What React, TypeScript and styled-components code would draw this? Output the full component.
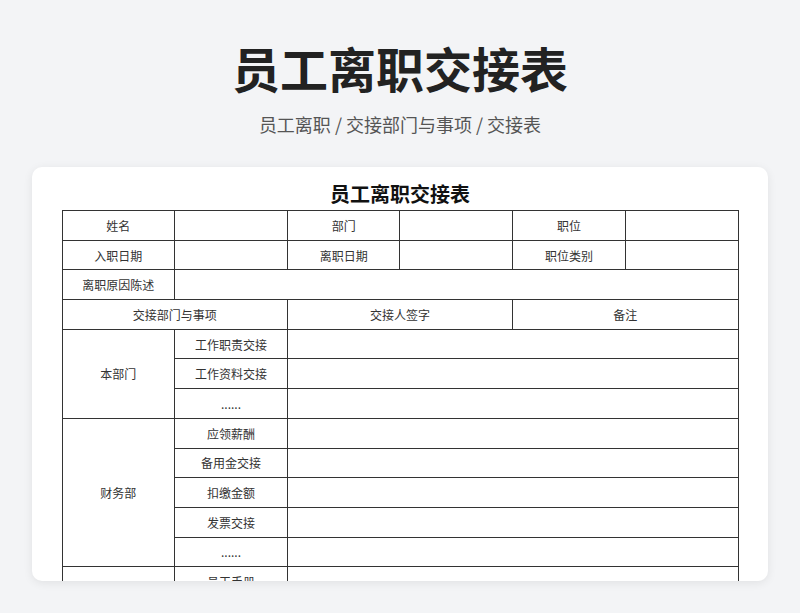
import styled, { createGlobalStyle } from 'styled-components'

const Global = createGlobalStyle`
    body {
        margin: 0;
        background: #f3f4f6;
        font-family: "Noto Sans CJK SC", "Noto Sans", sans-serif;
    }
`

const Page = styled.div`
    height: 613px;
    display: flex;
    flex-direction: column;
    align-items: center;
    overflow: hidden;
`

const Title = styled.h1`
    margin: 33px 0 0;
    font-size: 48px;
    line-height: 68px;
    font-weight: 700;
    color: #222;
`

const Subtitle = styled.div`
    margin-top: 10px;
    font-size: 18px;
    line-height: 26px;
    color: #555;
`

const Card = styled.div`
    margin-top: 30px;
    width: 736px;
    height: 414px;
    background: #fff;
    border-radius: 10px;
    box-shadow: 0 2px 10px rgba(0, 0, 0, 0.08);
    overflow: hidden;
    display: flex;
    flex-direction: column;
    align-items: center;
`

const SheetTitle = styled.div`
    margin-top: 12px;
    font-size: 20px;
    line-height: 30px;
    font-weight: 700;
    color: #111;
`

const Table = styled.table`
    border-collapse: collapse;
    table-layout: fixed;
    width: 677px;
    margin-top: 1px;
    font-size: 12px;
    color: #333;

    td {
        border: 1px solid #333;
        height: 28.7px;
        padding: 0;
        text-align: center;
    }
`

const items: [string, string[]][] = [
    ['本部门', ['工作职责交接', '工作资料交接', '......']],
    ['财务部', ['应领薪酬', '备用金交接', '扣缴金额', '发票交接', '......']],
    ['', ['员工手册', '', '']],
]

export default function App() {
    return (
        <Page>
            <Global />
            <Title>员工离职交接表</Title>
            <Subtitle>员工离职 / 交接部门与事项 / 交接表</Subtitle>
            <Card>
                <SheetTitle>员工离职交接表</SheetTitle>
                <Table>
                    <colgroup>
                        {[0, 1, 2, 3, 4, 5].map((i) => (
                            <col key={i} />
                        ))}
                    </colgroup>
                    <tbody>
                        <tr>
                            <td>姓名</td>
                            <td />
                            <td>部门</td>
                            <td />
                            <td>职位</td>
                            <td />
                        </tr>
                        <tr>
                            <td>入职日期</td>
                            <td />
                            <td>离职日期</td>
                            <td />
                            <td>职位类别</td>
                            <td />
                        </tr>
                        <tr>
                            <td>离职原因陈述</td>
                            <td colSpan={5} />
                        </tr>
                        <tr>
                            <td colSpan={2}>交接部门与事项</td>
                            <td colSpan={2}>交接人签字</td>
                            <td colSpan={2}>备注</td>
                        </tr>
                        {items.map(([dept, rows]) =>
                            rows.map((item, i) => (
                                <tr key={dept + i}>
                                    {i === 0 && <td rowSpan={rows.length}>{dept}</td>}
                                    <td>{item}</td>
                                    <td colSpan={4} />
                                </tr>
                            ))
                        )}
                    </tbody>
                </Table>
            </Card>
        </Page>
    )
}
